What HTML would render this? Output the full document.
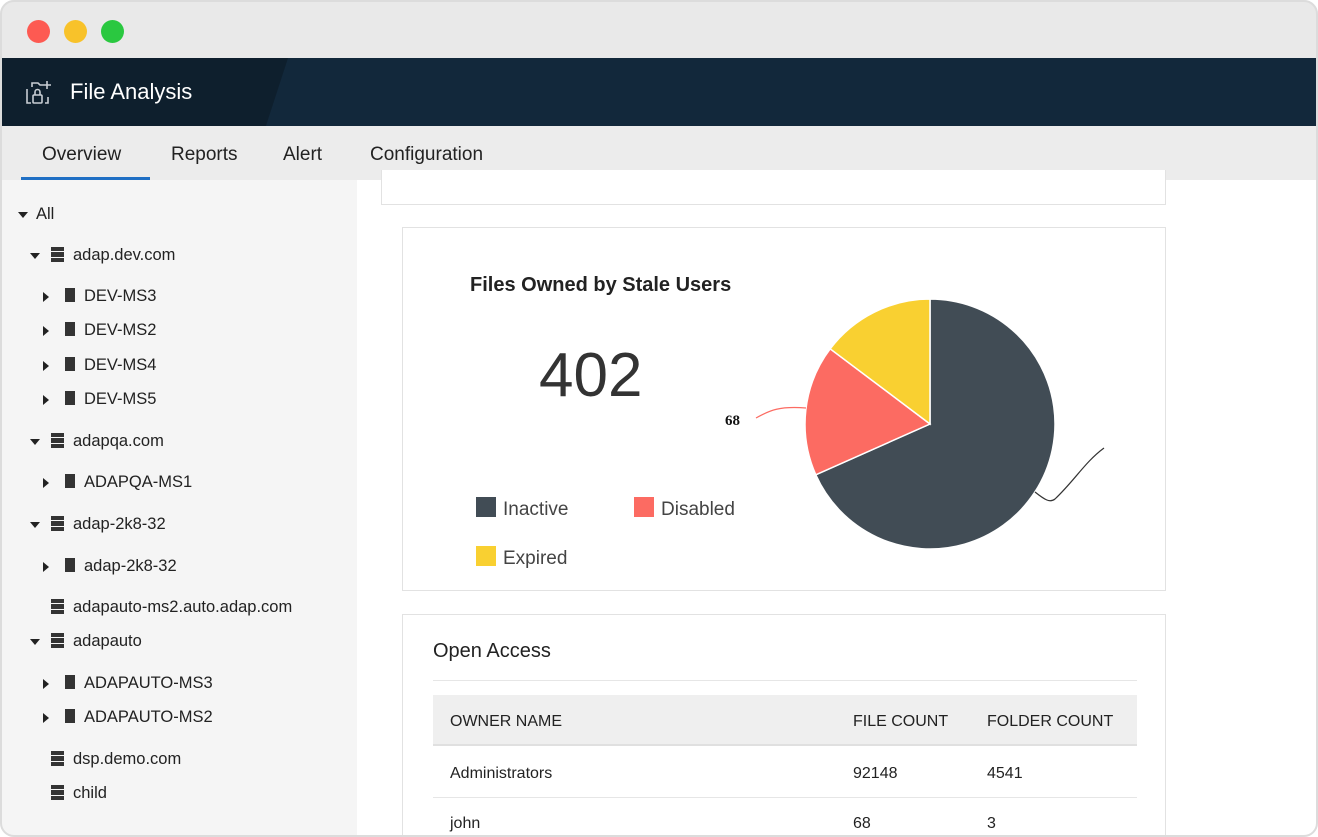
<!DOCTYPE html>
<html><head><meta charset="utf-8"><style>
*{margin:0;padding:0;box-sizing:border-box}
body{width:1318px;height:837px;background:#fff;font-family:"Liberation Sans",sans-serif;position:relative;overflow:hidden}
.win{position:absolute;left:0;top:0;width:1318px;height:837px;border-radius:14px;overflow:hidden;background:#fff}
.frame{position:absolute;left:0;top:0;width:1318px;height:837px;border:2px solid #dcdcdc;border-radius:14px;pointer-events:none}
.tb{position:absolute;left:0;top:0;width:100%;height:58px;background:#e9e9e9}
.dot{position:absolute;top:20px;width:23px;height:23px;border-radius:50%}
.hdr{position:absolute;left:0;top:58px;width:100%;height:68px;background:#0e1f2d;overflow:hidden}
.hdr .sl{position:absolute;top:0;width:1100px;height:68px;background:#12283b;transform:skewX(-18deg);transform-origin:0 0;left:288px}
.tabs{position:absolute;left:0;top:126px;width:100%;height:54px;background:#ececec}
.tab{position:absolute;top:18px;font-size:19px;color:#222}
.side{position:absolute;left:0;top:180px;width:357px;height:657px;background:#f5f5f5}
.it{position:absolute;font-size:16.5px;color:#222;white-space:nowrap;margin-top:2px}
.tri{display:inline-block;width:0;height:0;vertical-align:middle;margin-right:11px}
.dn{border-left:5px solid transparent;border-right:5px solid transparent;border-top:6px solid #222}
.rt{border-top:5px solid transparent;border-bottom:5px solid transparent;border-left:6px solid #222;margin-right:16px}
.srv{display:inline-block;width:13px;height:15px;margin-right:9px;vertical-align:-2px;background:linear-gradient(#333 0 4px,transparent 4px 5px,#333 5px 10px,transparent 10px 11px,#333 11px 15px)}
.pc{display:inline-block;width:10px;height:14px;background:#333;margin-right:9px;vertical-align:-1px}
.card{position:absolute;background:#fff;border:1px solid #e2e2e2}
.abs{position:absolute;white-space:nowrap}
.t{margin-top:2px}
</style></head><body><div class="win">
<div class="tb">
<div class="dot" style="left:27px;background:#fd5a52"></div>
<div class="dot" style="left:64px;background:#f8c22a"></div>
<div class="dot" style="left:101px;background:#2ac840"></div>
</div>
<div class="hdr"><div class="sl"></div>
<svg style="position:absolute;left:24px;top:21px" width="32" height="28" viewBox="0 0 32 28" fill="none" stroke="#c8ced4" stroke-width="1.6">
<path d="M8 8V4h6l2 2h3M3 10v14h4M24 18v6h-3"/><path d="M23 2v8M19 6h8"/><rect x="9" y="16" width="9" height="8" rx="1"/><path d="M11 16v-3a2.5 2.5 0 0 1 5 0v3"/></svg>
<div class="abs" style="left:70px;top:21px;font-size:22px;color:#fff">File Analysis</div></div>
<div class="tabs">
<div class="tab" style="left:42px">Overview</div>
<div class="tab" style="left:171px">Reports</div>
<div class="tab" style="left:283px">Alert</div>
<div class="tab" style="left:370px">Configuration</div>
<div style="position:absolute;left:21px;top:51px;width:129px;height:3px;background:#1f6fc4"></div>
</div>
<div class="side">
<div class="it" style="left:18px;top:23px"><span class="tri dn" style="margin-right:8px"></span>All</div>
<div class="it" style="left:30px;top:64px"><span class="tri dn"></span><span class="srv"></span>adap.dev.com</div>
<div class="it" style="left:43px;top:105px"><span class="tri rt"></span><b class="pc"></b>DEV-MS3</div>
<div class="it" style="left:43px;top:139px"><span class="tri rt"></span><b class="pc"></b>DEV-MS2</div>
<div class="it" style="left:43px;top:174px"><span class="tri rt"></span><b class="pc"></b>DEV-MS4</div>
<div class="it" style="left:43px;top:208px"><span class="tri rt"></span><b class="pc"></b>DEV-MS5</div>
<div class="it" style="left:30px;top:250px"><span class="tri dn"></span><span class="srv"></span>adapqa.com</div>
<div class="it" style="left:43px;top:291px"><span class="tri rt"></span><b class="pc"></b>ADAPQA-MS1</div>
<div class="it" style="left:30px;top:333px"><span class="tri dn"></span><span class="srv"></span>adap-2k8-32</div>
<div class="it" style="left:43px;top:375px"><span class="tri rt"></span><b class="pc"></b>adap-2k8-32</div>
<div class="it" style="left:51px;top:416px"><span class="srv"></span>adapauto-ms2.auto.adap.com</div>
<div class="it" style="left:30px;top:450px"><span class="tri dn"></span><span class="srv"></span>adapauto</div>
<div class="it" style="left:43px;top:492px"><span class="tri rt"></span><b class="pc"></b>ADAPAUTO-MS3</div>
<div class="it" style="left:43px;top:526px"><span class="tri rt"></span><b class="pc"></b>ADAPAUTO-MS2</div>
<div class="it" style="left:51px;top:568px"><span class="srv"></span>dsp.demo.com</div>
<div class="it" style="left:51px;top:602px"><span class="srv"></span>child</div>
</div>
<div class="card" style="left:381px;top:170px;width:785px;height:35px;border-top:none"></div>
<div class="card" style="left:402px;top:227px;width:764px;height:364px"></div>
<div class="abs t" style="left:470px;top:272px;font-size:20px;font-weight:bold;color:#222">Files Owned by Stale Users</div>
<div class="abs" style="left:539px;top:340px;font-size:62px;color:#333">402</div>
<div class="abs" style="left:476px;top:497px;width:20px;height:20px;background:#414c55"></div>
<div class="abs t" style="left:503px;top:497px;font-size:19px;color:#444">Inactive</div>
<div class="abs" style="left:634px;top:497px;width:20px;height:20px;background:#fc6b62"></div>
<div class="abs t" style="left:661px;top:497px;font-size:19px;color:#444">Disabled</div>
<div class="abs" style="left:476px;top:546px;width:20px;height:20px;background:#f9d031"></div>
<div class="abs t" style="left:503px;top:546px;font-size:19px;color:#444">Expired</div>
<div class="abs t" style="left:725px;top:411px;font-size:15px;font-weight:bold;color:#111;font-family:'Liberation Serif',serif">68</div>
<svg class="abs" style="left:0;top:0" width="1318" height="837">
<path d="M930,424 L930,299 A125,125 0 1 1 815.8,474.8 Z" fill="#414c55" stroke="#fff" stroke-width="1.5"/>
<path d="M930,424 L815.8,474.8 A125,125 0 0 1 830.2,348.8 Z" fill="#fc6b62" stroke="#fff" stroke-width="1.5"/>
<path d="M930,424 L830.2,348.8 A125,125 0 0 1 930,299 Z" fill="#f9d031" stroke="#fff" stroke-width="1.5"/>
<path d="M756,418 C770,410 780,406 806,408" fill="none" stroke="#fc6b62" stroke-width="1.2"/>
<path d="M1035,492 C1045,500 1050,503 1055,499 C1075,480 1085,462 1104,448" fill="none" stroke="#333" stroke-width="1.2"/>
</svg>
<div class="card" style="left:402px;top:614px;width:764px;height:240px"></div>
<div class="abs t" style="left:433px;top:638px;font-size:20px;color:#222">Open Access</div>
<div class="abs" style="left:433px;top:680px;width:704px;height:1px;background:#e6e6e6"></div>
<div class="abs" style="left:433px;top:695px;width:704px;height:51px;background:#efefef;border-bottom:2px solid #e0e0e0"></div>
<div class="abs t" style="left:450px;top:711px;font-size:16px;color:#222">OWNER NAME</div>
<div class="abs t" style="left:853px;top:711px;font-size:16px;color:#222">FILE COUNT</div>
<div class="abs t" style="left:987px;top:711px;font-size:16px;color:#222">FOLDER COUNT</div>
<div class="abs t" style="left:450px;top:763px;font-size:16px;color:#222">Administrators</div>
<div class="abs t" style="left:853px;top:763px;font-size:16px;color:#222">92148</div>
<div class="abs t" style="left:987px;top:763px;font-size:16px;color:#222">4541</div>
<div class="abs" style="left:433px;top:797px;width:704px;height:1px;background:#e6e6e6"></div>
<div class="abs t" style="left:450px;top:813px;font-size:16px;color:#222">john</div>
<div class="abs t" style="left:853px;top:813px;font-size:16px;color:#222">68</div>
<div class="abs t" style="left:987px;top:813px;font-size:16px;color:#222">3</div>
</div><div class="frame"></div></body></html>
